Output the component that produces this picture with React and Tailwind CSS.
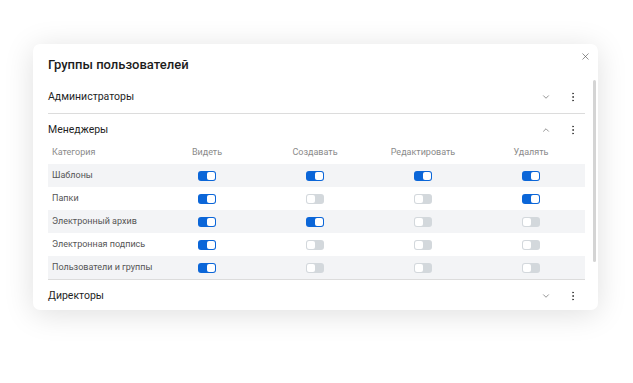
import React from 'react';
import { ChevronDown, ChevronUp, EllipsisVertical, X } from 'lucide-react';

const columns = ['Видеть', 'Создавать', 'Редактировать', 'Удалять'];

const rows = [
    { name: 'Шаблоны', values: [true, true, true, true] },
    { name: 'Папки', values: [true, false, false, true] },
    { name: 'Электронный архив', values: [true, true, false, false] },
    { name: 'Электронная подпись', values: [true, false, false, false] },
    { name: 'Пользователи и группы', values: [true, false, false, false] },
];

const Toggle = ({ on }) => (
    <div
        className={`w-[18px] h-[10px] rounded-[3px] p-[1px] flex ${on ? 'bg-[#0b66d8] justify-end' : 'bg-[#d3d8dc] justify-start'}`}
    >
        <div className="w-[8px] h-[8px] rounded-[2px] bg-white" />
    </div>
);

const GroupHeader = ({ title, open }) => (
    <div className="h-[32px] flex items-center justify-between">
        <span className="text-[10.5px] text-[#1f1f1f]">{title}</span>
        <div className="flex items-center">
            {open ? (
                <ChevronUp className="w-[10px] h-[10px] text-[#555] mr-[16px]" strokeWidth={1.5} />
            ) : (
                <ChevronDown className="w-[10px] h-[10px] text-[#555] mr-[16px]" strokeWidth={1.5} />
            )}
            <EllipsisVertical className="w-[12px] h-[12px] text-[#444] mr-[6px]" strokeWidth={2} />
        </div>
    </div>
);

export default function App() {
    return (
        <div
            className="w-[633px] h-[383px] bg-white pt-[44px] pl-[33px]"
            style={{ fontFamily: 'Roboto, "Noto Sans", sans-serif' }}
        >
            <div className="relative w-[565px] h-[266px] bg-white rounded-[7px] shadow-[0_4px_30px_rgba(0,0,0,0.13)] pl-[15px] pr-[13px] pt-[13px]">
                <button className="absolute right-[6px] top-[6px] p-[1px] text-[#555]">
                    <X className="w-[11px] h-[11px]" strokeWidth={1.4} />
                </button>

                {/* scrollbar */}
                <div className="absolute right-[2px] top-[36px] w-[3px] h-[182px] rounded-full bg-[#d4d4d4]" />

                <h2 className="text-[13px] leading-[16px] font-medium text-[#1c1c1c]">Группы пользователей</h2>

                <div className="mt-[8px]">
                    <div className="border-b border-[#dcdcdc]">
                        <GroupHeader title="Администраторы" />
                    </div>

                    <div className="border-b border-[#dcdcdc]">
                        <GroupHeader title="Менеджеры" open />
                        <div className="grid grid-cols-[1fr_108px_108px_108px_108px] h-[18px] items-start text-[9px] text-[#8a8a8a]">
                            <span className="pl-[4px]">Категория</span>
                            {columns.map((c) => (
                                <span key={c} className="text-center">{c}</span>
                            ))}
                        </div>
                        {rows.map((r, i) => (
                            <div
                                key={r.name}
                                className={`grid grid-cols-[1fr_108px_108px_108px_108px] h-[23px] items-center ${i % 2 === 0 ? 'bg-[#f3f4f6]' : 'bg-white'}`}
                            >
                                <span className="pl-[4px] text-[9px] text-[#555] whitespace-nowrap">{r.name}</span>
                                {r.values.map((v, j) => (
                                    <div key={j} className="flex justify-center">
                                        <Toggle on={v} />
                                    </div>
                                ))}
                            </div>
                        ))}
                    </div>

                    <GroupHeader title="Директоры" />
                </div>
            </div>
        </div>
    );
}
